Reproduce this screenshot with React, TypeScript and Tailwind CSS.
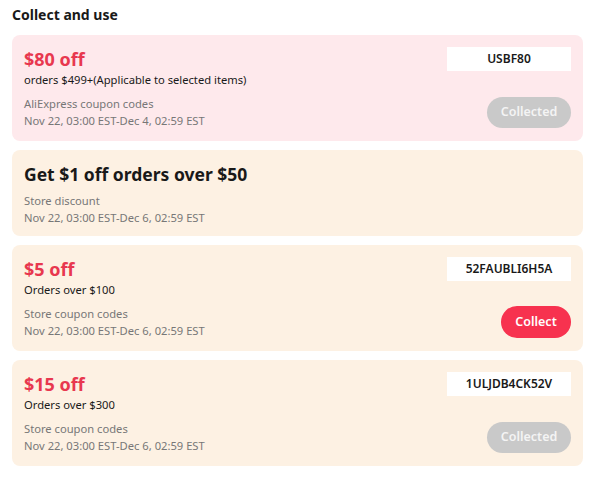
import React from "react";

type Coupon = {
  title: string;
  big?: boolean;
  condition?: string;
  source: string;
  period: string;
  code?: string;
  state?: "collect" | "collected";
  tone: "pink" | "peach";
};

const coupons: Coupon[] = [
  {
    title: "$80 off",
    condition: "orders $499+(Applicable to selected items)",
    source: "AliExpress coupon codes",
    period: "Nov 22, 03:00 EST-Dec 4, 02:59 EST",
    code: "USBF80",
    state: "collected",
    tone: "pink",
  },
  {
    title: "Get $1 off orders over $50",
    big: true,
    source: "Store discount",
    period: "Nov 22, 03:00 EST-Dec 6, 02:59 EST",
    tone: "peach",
  },
  {
    title: "$5 off",
    condition: "Orders over $100",
    source: "Store coupon codes",
    period: "Nov 22, 03:00 EST-Dec 6, 02:59 EST",
    code: "52FAUBLI6H5A",
    state: "collect",
    tone: "peach",
  },
  {
    title: "$15 off",
    condition: "Orders over $300",
    source: "Store coupon codes",
    period: "Nov 22, 03:00 EST-Dec 6, 02:59 EST",
    code: "1ULJDB4CK52V",
    state: "collected",
    tone: "peach",
  },
];

const CouponCard: React.FC<{ c: Coupon }> = ({ c }) => {
  return (
    <div
      className={`flex justify-between rounded-lg px-3 pt-3 ${c.big ? "pb-[10px]" : "pb-3"} ${
        c.tone === "pink" ? "bg-[#fee9ec]" : "bg-[#fdf1e3]"
      }`}
    >
      <div className="flex flex-col">
        {c.big ? (
          <div className="text-[17.5px] leading-[24px] font-bold text-[#191919]">{c.title}</div>
        ) : (
          <>
            <div className="text-[18px] leading-[24px] font-bold text-[#e8384f]">{c.title}</div>
            <div className="text-[11.2px] leading-[18px] text-[#191919]">{c.condition}</div>
          </>
        )}
        <div className="mt-[6px] text-[11.2px] leading-[17px] text-[#777]">{c.source}</div>
        <div className="text-[11.2px] leading-[17px] text-[#777]">{c.period}</div>
      </div>
      {c.code && (
        <div className="flex flex-col items-end justify-between">
          <div className="w-[124px] h-[24px] bg-white flex items-center justify-center text-[12px] font-semibold text-[#191919]">
            {c.code}
          </div>
          {c.state === "collect" ? (
            <button className="w-[70px] h-[32px] rounded-full bg-[#f7324f] text-white text-[12.5px] font-semibold mb-[1px]">
              Collect
            </button>
          ) : (
            <button className="w-[84px] h-[31px] rounded-full bg-[#c9c9c9] text-[#f4f4f4] text-[12.5px] font-semibold mb-[1px]">
              Collected
            </button>
          )}
        </div>
      )}
    </div>
  );
};

export default function App() {
  return (
    <div
      className="w-[597px] h-[479px] bg-white px-3 pt-[5px]"
      style={{ fontFamily: '"Segoe UI", "Noto Sans", sans-serif' }}
    >
      <h2 className="text-[14px] leading-[20px] font-bold text-[#191919] mb-[10px]">Collect and use</h2>
      <div className="flex flex-col gap-[9px] w-[571px]">
        {coupons.map((c, i) => (
          <CouponCard key={i} c={c} />
        ))}
      </div>
    </div>
  );
}
